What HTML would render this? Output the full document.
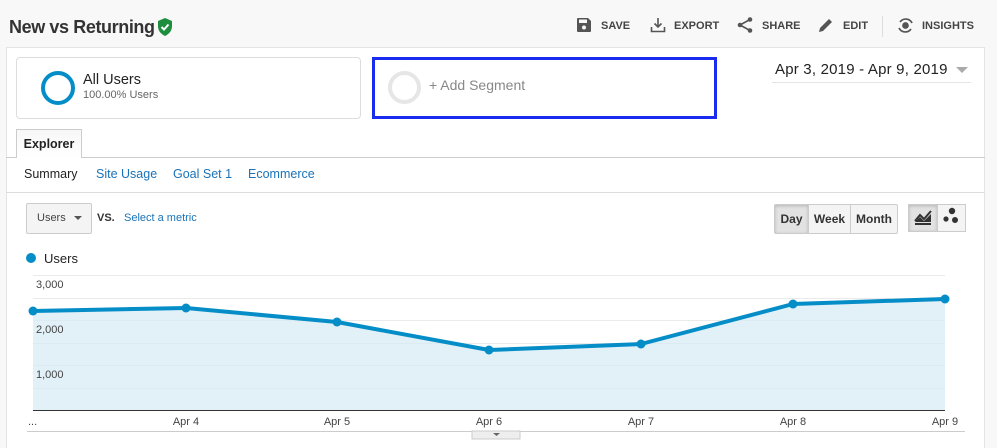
<!DOCTYPE html>
<html><head><meta charset="utf-8">
<style>
*{box-sizing:border-box;margin:0;padding:0}
body{width:997px;height:448px;overflow:hidden;background:#f8f8f8;font-family:"Liberation Sans",Arial,sans-serif;position:relative;color:#222}
.abs{position:absolute}
.title{left:9px;top:17px;font-size:18px;letter-spacing:-0.4px;font-weight:bold;color:#333}
.act{top:20px;font-size:11px;font-weight:bold;color:#444}
.panel{left:6px;top:47px;width:979px;height:401px;background:#fff;border-left:1px solid #e4e4e4;border-top:1px solid #e4e4e4;border-right:1px solid #e4e4e4}
.link{color:#1a73b8}
.btn{border:1px solid #ccc;background:#f4f4f4;font-size:12px;font-weight:bold;color:#333;text-align:center;line-height:28px}
</style></head><body>
<div class="abs title">New vs Returning</div>
<svg class="abs" style="left:157px;top:18px" width="16" height="18" viewBox="0 0 16 18"><path d="M8 0L15 3V8C15 13 12 16 8 18C4 16 1 13 1 8V3Z" fill="#1e8e3e"/><path d="M4.5 9L7 11.5L11.5 6.5" stroke="#fff" stroke-width="2" fill="none"/></svg>

<svg class="abs" style="left:577px;top:18px" width="14" height="14" viewBox="0 0 14 14"><path d="M0 1a1 1 0 0 1 1-1h10l3 3v10a1 1 0 0 1-1 1H1a1 1 0 0 1-1-1z" fill="#555"/><rect x="2" y="1.5" width="8" height="3.5" fill="#f8f8f8"/><circle cx="7" cy="9.5" r="2" fill="#f8f8f8"/></svg>
<div class="abs act" style="left:601px">SAVE</div>
<svg class="abs" style="left:650px;top:17px" width="16" height="16" viewBox="0 0 16 16" fill="none" stroke="#555" stroke-width="1.6"><path d="M8 1v9M4.5 6.5L8 10l3.5-3.5M1.5 10v4.5h13V10"/></svg>
<div class="abs act" style="left:674px">EXPORT</div>
<svg class="abs" style="left:737px;top:17px" width="16" height="16" viewBox="0 0 16 16"><path d="M13 2.5L3 8l10 5.5" stroke="#555" stroke-width="1.6" fill="none"/><circle cx="13" cy="2.5" r="2.3" fill="#555"/><circle cx="3" cy="8" r="2.3" fill="#555"/><circle cx="13" cy="13.5" r="2.3" fill="#555"/></svg>
<div class="abs act" style="left:762px">SHARE</div>
<svg class="abs" style="left:818px;top:17px" width="16" height="16" viewBox="0 0 16 16"><path d="M1 15l1-4L11 2l3 3-9 9z" fill="#555"/></svg>
<div class="abs act" style="left:843px">EDIT</div>
<div class="abs" style="left:882px;top:16px;width:1px;height:21px;background:#ddd"></div>
<svg class="abs" style="left:897px;top:17px" width="17" height="17" viewBox="0 0 17 17" fill="none" stroke="#555" stroke-width="1.7"><path d="M3 5A7 7 0 0 1 15 6M14 12A7 7 0 0 1 2 11"/><circle cx="8.5" cy="8.5" r="2.5" fill="#555"/></svg>
<div class="abs act" style="left:922px">INSIGHTS</div>

<div class="abs panel"></div>
<div class="abs" style="left:16px;top:57px;width:345px;height:62px;border:1px solid #ddd;border-radius:4px;background:#fff"></div>
<div class="abs" style="left:41px;top:71px;width:34px;height:34px;border:4px solid #058dc7;border-radius:50%"></div>
<div class="abs" style="left:83px;top:72px;font-size:14.5px;color:#222">All Users</div>
<div class="abs" style="left:83px;top:89px;font-size:11px;color:#666">100.00% Users</div>
<div class="abs" style="left:372px;top:57px;width:345px;height:62px;border:3px solid #1a2cf0;background:#fff"></div>
<div class="abs" style="left:388px;top:71px;width:33px;height:33px;border:4px solid #e6e6e6;border-radius:50%"></div>
<div class="abs" style="left:429px;top:77px;font-size:14px;color:#888">+ Add Segment</div>
<div class="abs" style="left:775px;top:61px;font-size:15px;letter-spacing:0.2px;color:#222">Apr 3, 2019 - Apr 9, 2019</div>
<div class="abs" style="left:956px;top:67px;width:0;height:0;border-left:6px solid transparent;border-right:6px solid transparent;border-top:6px solid #aaa"></div>
<div class="abs" style="left:772px;top:82px;width:199px;height:1px;background:#e4e4e4"></div>

<div class="abs" style="left:6px;top:157px;width:979px;height:1px;background:#ccc"></div>
<div class="abs" style="left:16px;top:129px;width:66px;height:29px;border:1px solid #ccc;border-bottom:none;background:linear-gradient(#f7f7f7,#fff);font-size:12.5px;font-weight:bold;color:#222;text-align:center;line-height:29px">Explorer</div>
<div class="abs" style="left:24px;top:167px;font-size:12.5px;color:#222">Summary</div>
<div class="abs link" style="left:96px;top:167px;font-size:12.5px">Site Usage</div>
<div class="abs link" style="left:173px;top:167px;font-size:12.5px">Goal Set 1</div>
<div class="abs link" style="left:248px;top:167px;font-size:12.5px">Ecommerce</div>
<div class="abs" style="left:6px;top:192px;width:979px;height:1px;background:#ddd"></div>

<div class="abs" style="left:26px;top:203px;width:66px;height:31px;border:1px solid #ccc;border-radius:2px;background:#f4f4f4;font-size:11px;color:#444;line-height:29px;padding-left:10px">Users</div>
<div class="abs" style="left:74px;top:216px;border-left:4px solid transparent;border-right:4px solid transparent;border-top:4px solid #555"></div>
<div class="abs" style="left:97px;top:212px;font-size:11px;font-weight:bold;color:#333">VS.</div>
<div class="abs link" style="left:124px;top:212px;font-size:11px">Select a metric</div>

<div class="abs btn" style="left:774px;top:204px;width:35px;height:30px;background:#e2e2e2;box-shadow:inset 0 1px 3px rgba(0,0,0,.2);border-radius:2px 0 0 2px">Day</div>
<div class="abs btn" style="left:808px;top:204px;width:43px;height:30px">Week</div>
<div class="abs btn" style="left:850px;top:204px;width:48px;height:30px;border-radius:0 2px 2px 0">Month</div>
<div class="abs btn" style="left:908px;top:204px;width:30px;height:28px;background:#e2e2e2;box-shadow:inset 0 1px 3px rgba(0,0,0,.2)"></div>
<div class="abs btn" style="left:937px;top:204px;width:29px;height:28px"></div>
<svg class="abs" style="left:914px;top:209px" width="18" height="16" viewBox="0 0 18 16"><path d="M1 12L6 6l4 4 7-8M1 15h16" stroke="#333" stroke-width="2" fill="none"/><path d="M1 13L6 8l4 4 7-7v8H1z" fill="#333"/></svg>
<svg class="abs" style="left:942px;top:207px" width="18" height="18" viewBox="0 0 18 18"><circle cx="10" cy="4" r="3.2" fill="#333"/><circle cx="4" cy="12" r="2.6" fill="#333"/><circle cx="13" cy="13" r="3" fill="#333"/></svg>

<div class="abs" style="left:26px;top:253px;width:10px;height:10px;border-radius:50%;background:#058dc7"></div>
<div class="abs" style="left:44px;top:251px;font-size:13px;color:#222">Users</div>

<svg class="abs" style="left:0;top:0" width="997" height="448">
<g stroke="#eaeaea" stroke-width="1">
<line x1="33" y1="275.5" x2="945" y2="275.5"/><line x1="33" y1="298.5" x2="945" y2="298.5"/>
<line x1="33" y1="320.5" x2="945" y2="320.5"/><line x1="33" y1="343.5" x2="945" y2="343.5"/>
<line x1="33" y1="365.5" x2="945" y2="365.5"/><line x1="33" y1="388.5" x2="945" y2="388.5"/>
</g>
<path d="M33 311L186 308L337 322L489 350L641 344L793 304L945 299V410H33Z" fill="#d6eaf5" fill-opacity=".7"/>
<path d="M33 311L186 308L337 322L489 350L641 344L793 304L945 299" stroke="#058dc7" stroke-width="4" fill="none" stroke-linejoin="round"/>
<g fill="#058dc7"><circle cx="33" cy="311" r="4.5"/><circle cx="186" cy="308" r="4.5"/><circle cx="337" cy="322" r="4.5"/><circle cx="489" cy="350" r="4.5"/><circle cx="641" cy="344" r="4.5"/><circle cx="793" cy="304" r="4.5"/><circle cx="945" cy="299" r="4.5"/></g>
<line x1="33" y1="410.5" x2="945" y2="410.5" stroke="#333" stroke-width="1"/>
<line x1="27" y1="431.5" x2="965" y2="431.5" stroke="#ccc" stroke-width="1"/>
<g font-family="Liberation Sans,Arial,sans-serif" font-size="11" fill="#444">
<text x="36" y="288">3,000</text><text x="36" y="333">2,000</text><text x="36" y="378">1,000</text>
<text x="28" y="425">...</text>
<text x="186" y="425" text-anchor="middle">Apr 4</text><text x="337" y="425" text-anchor="middle">Apr 5</text>
<text x="489" y="425" text-anchor="middle">Apr 6</text><text x="641" y="425" text-anchor="middle">Apr 7</text>
<text x="793" y="425" text-anchor="middle">Apr 8</text><text x="945" y="425" text-anchor="middle">Apr 9</text>
</g>
<rect x="472" y="431" width="48" height="8" fill="#eee" stroke="#ccc"/>
<path d="M493 433h7l-3.5 3z" fill="#666"/>
</svg>
</body></html>
